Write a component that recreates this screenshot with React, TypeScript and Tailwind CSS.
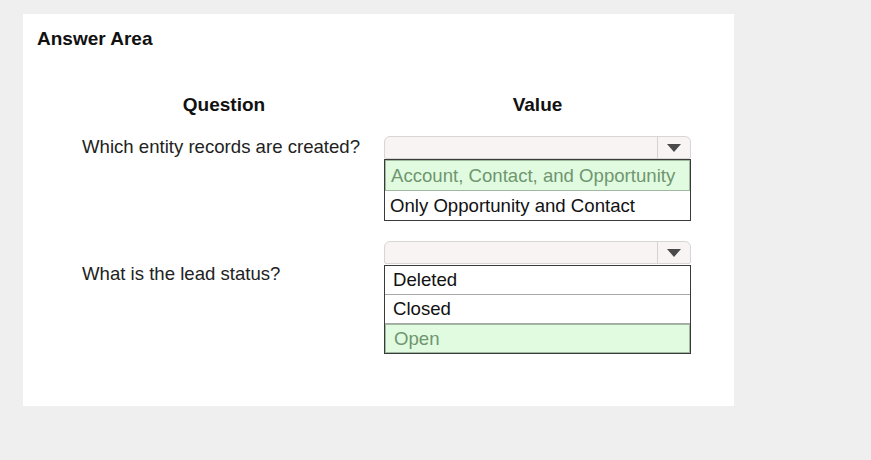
const font = { fontFamily: '"Liberation Sans", Arial, sans-serif' };

function Arrow() {
  return (
    <svg width="14" height="8" viewBox="0 0 14 8">
      <path d="M0 0 H14 L7 8 Z" fill="#4a4a4a" />
    </svg>
  );
}

function Select({
  options,
  answer,
  pad,
  offset,
  rowH,
  hitH,
}: {
  options: string[];
  answer: number;
  pad: string;
  offset: string;
  rowH: string;
  hitH: string;
}) {
  return (
    <div className="w-[307px]">
      <div className="flex h-[23px] rounded-t-[6px] rounded-b-[2px] border border-[#d9d5d5] bg-[#f8f4f4]">
        <div className="flex-1" />
        <div className="flex w-[33px] items-center justify-center border-l border-[#d6d2d2]">
          <Arrow />
        </div>
      </div>
      <div className={"border border-[#3a3a3a] bg-white " + offset}>
        {options.map((o, i) => (
          <div
            key={o}
            className={
              i === answer
                ? "flex items-center border border-[#9fb89f] bg-[#e1fbe1] text-[#6f966f] " + hitH + " " + pad
                : "flex items-center border-b border-[#a8a8a8] text-[#111] last:border-b-0 " + rowH + " " + pad
            }
          >
            {o}
          </div>
        ))}
      </div>
    </div>
  );
}

export default function App() {
  return (
    <div className="h-[460px] w-[871px] bg-[#efefef] pt-[14px] pl-[23px]" style={font}>
      <div className="h-[392px] w-[711px] bg-white pt-[14px] pl-[14px]">
        <div className="text-[19px] leading-[22px] font-bold text-[#111]">Answer Area</div>
        <div className="mt-[44px] ml-[45px] grid grid-cols-[284px_307px] gap-x-[18px] text-[18.6px] leading-[22px]">
          <div className="text-center text-[19px] font-bold text-[#111]">Question</div>
          <div className="text-center text-[19px] font-bold text-[#111]">Value</div>

          <div className="mt-[20px] whitespace-nowrap text-[#222]">Which entity records are created?</div>
          <div className="mt-[20px]">
            <Select
              options={["Account, Contact, and Opportunity", "Only Opportunity and Contact"]}
              answer={0}
              pad="pl-[5px]"
              offset=""
              rowH="h-[29px]"
              hitH="h-[31px]"
            />
          </div>

          <div className="mt-[42px] text-[#222]">What is the lead status?</div>
          <div className="mt-[20px]">
            <Select
              options={["Deleted", "Closed", "Open"]}
              answer={2}
              pad="pl-[8px]"
              offset="mt-[1px]"
              rowH="h-[29px]"
              hitH="h-[29px]"
            />
          </div>
        </div>
      </div>
    </div>
  );
}
